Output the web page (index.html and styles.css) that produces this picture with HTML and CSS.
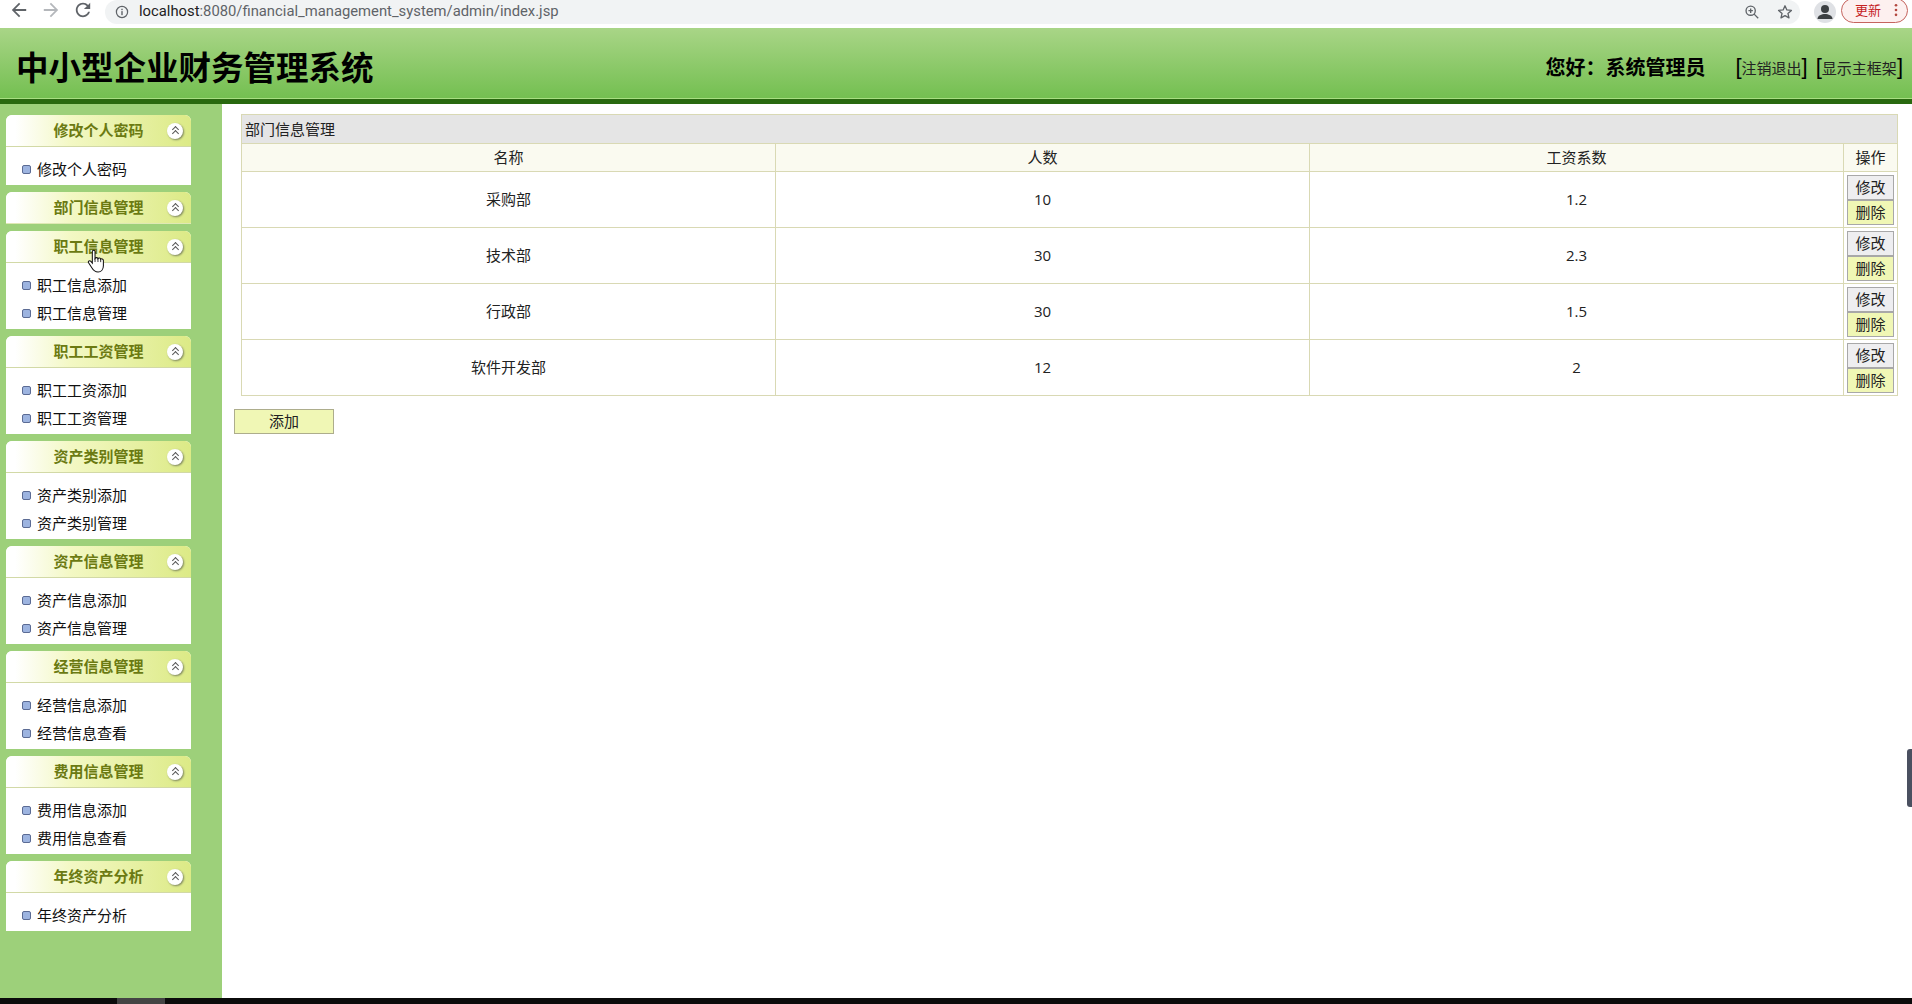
FILE: index.html
```html
<!DOCTYPE html>
<html lang="zh-CN">
<head>
    <meta charset="UTF-8">
    <title>中小型企业财务管理系统</title>
    <link rel="stylesheet" href="styles.css">
</head>
<body>
    <!-- Browser toolbar -->
    <div class="toolbar">
        <svg class="nav-icon" viewBox="2 2 20 20"><path d="M20 11H7.83l5.59-5.59L12 4l-8 8 8 8 1.41-1.41L7.83 13H20v-2z"/></svg>
        <svg class="nav-icon nav-off" viewBox="2 2 20 20"><path d="M4 11h12.17l-5.59-5.59L12 4l8 8-8 8-1.41-1.41L16.17 13H4v-2z"/></svg>
        <svg class="nav-icon" viewBox="2 2 20 20"><path d="M17.65 6.35C16.2 4.9 14.21 4 12 4c-4.42 0-7.99 3.58-7.99 8s3.57 8 7.99 8c3.73 0 6.84-2.55 7.73-6h-2.08c-.82 2.33-3.04 4-5.65 4-3.31 0-6-2.69-6-6s2.69-6 6-6c1.66 0 3.14.69 4.22 1.78L13 11h7V4l-2.35 2.35z"/></svg>
        <div class="urlbar">
            <svg class="info-icon" viewBox="0 0 16 16"><circle cx="8" cy="8" r="6.4" fill="none" stroke="#5f6368" stroke-width="1.4"/><rect x="7.2" y="7" width="1.6" height="4.6" fill="#5f6368"/><rect x="7.2" y="4.3" width="1.6" height="1.6" fill="#5f6368"/></svg>
            <span class="url"><span class="host">localhost</span>:8080/financial_management_system/admin/index.jsp</span>
            <svg class="url-icon" viewBox="0 0 18 18"><circle cx="7.5" cy="7.5" r="5.2" fill="none" stroke="#5f6368" stroke-width="1.5"/><path d="M11.4 11.4L16 16M5 7.5h5M7.5 5v5" fill="none" stroke="#5f6368" stroke-width="1.5"/></svg>
            <svg class="url-icon star-icon" viewBox="0 0 18 18"><path d="M9 2l2.1 4.7 5.1.5-3.9 3.4 1.2 5L9 13l-4.5 2.6 1.2-5-3.9-3.4 5.1-.5z" fill="none" stroke="#5f6368" stroke-width="1.5" stroke-linejoin="round"/></svg>
        </div>
        <div class="avatar">
            <svg viewBox="0 0 22 22"><circle cx="11" cy="8" r="4" fill="#3c4043"/><path d="M3.5 18c0-3.6 4.3-5 7.5-5s7.5 1.4 7.5 5z" fill="#3c4043"/></svg>
        </div>
        <div class="update">
            <span>更新</span>
            <svg viewBox="0 0 4 16"><circle cx="2" cy="2.5" r="1.5"/><circle cx="2" cy="8" r="1.5"/><circle cx="2" cy="13.5" r="1.5"/></svg>
        </div>
    </div>

    <!-- Page header -->
    <div class="header">
        <h1>中小型企业财务管理系统</h1>
        <div class="user-info">
            <span class="hello">您好：系统管理员</span>
            <span class="links">
                <span class="link"><b>[</b>注销退出<b>]</b></span>
                <span class="link"><b>[</b>显示主框架<b>]</b></span>
            </span>
        </div>
    </div>

    <div class="page">
        <!-- Left menu -->
        <div class="sidebar">
            <div class="menu">
                <div class="menu-title"><span>修改个人密码</span><i class="fold"></i></div>
                <ul><li>修改个人密码</li></ul>
            </div>
            <div class="menu">
                <div class="menu-title closed"><span>部门信息管理</span><i class="fold"></i></div>
            </div>
            <div class="menu">
                <div class="menu-title"><span>职工信息管理</span><i class="fold"></i></div>
                <ul><li>职工信息添加</li><li>职工信息管理</li></ul>
            </div>
            <div class="menu">
                <div class="menu-title"><span>职工工资管理</span><i class="fold"></i></div>
                <ul><li>职工工资添加</li><li>职工工资管理</li></ul>
            </div>
            <div class="menu">
                <div class="menu-title"><span>资产类别管理</span><i class="fold"></i></div>
                <ul><li>资产类别添加</li><li>资产类别管理</li></ul>
            </div>
            <div class="menu">
                <div class="menu-title"><span>资产信息管理</span><i class="fold"></i></div>
                <ul><li>资产信息添加</li><li>资产信息管理</li></ul>
            </div>
            <div class="menu">
                <div class="menu-title"><span>经营信息管理</span><i class="fold"></i></div>
                <ul><li>经营信息添加</li><li>经营信息查看</li></ul>
            </div>
            <div class="menu">
                <div class="menu-title"><span>费用信息管理</span><i class="fold"></i></div>
                <ul><li>费用信息添加</li><li>费用信息查看</li></ul>
            </div>
            <div class="menu">
                <div class="menu-title"><span>年终资产分析</span><i class="fold"></i></div>
                <ul><li>年终资产分析</li></ul>
            </div>
        </div>

        <!-- Department table -->
        <div class="content">
            <table class="grid">
                <colgroup><col class="col-data"><col class="col-data"><col class="col-data"><col class="col-op"></colgroup>
                <tr class="grid-title"><td colspan="4">部门信息管理</td></tr>
                <tr class="grid-head"><td>名称</td><td>人数</td><td>工资系数</td><td>操作</td></tr>
                <tr>
                    <td>采购部</td><td>10</td><td>1.2</td>
                    <td class="ops"><button class="btn-edit">修改</button><button class="btn-del">删除</button></td>
                </tr>
                <tr>
                    <td>技术部</td><td>30</td><td>2.3</td>
                    <td class="ops"><button class="btn-edit">修改</button><button class="btn-del">删除</button></td>
                </tr>
                <tr>
                    <td>行政部</td><td>30</td><td>1.5</td>
                    <td class="ops"><button class="btn-edit">修改</button><button class="btn-del">删除</button></td>
                </tr>
                <tr>
                    <td>软件开发部</td><td>12</td><td>2</td>
                    <td class="ops"><button class="btn-edit">修改</button><button class="btn-del">删除</button></td>
                </tr>
            </table>
            <button class="btn-add">添加</button>
        </div>
    </div>

    <!-- Taskbar strip at the bottom of the capture -->
    <div class="taskbar"><span class="task-item"></span></div>

    <div class="scroll-handle"></div>
    <svg class="cursor" viewBox="0 0 18 23"><path d="M5 2.2C5 .9 7.6 .9 7.6 2.2V9C8.2 8 10.2 8 10.4 9.2 11 8.3 12.9 8.5 13 9.8 13.7 9 15.6 9.4 15.6 11V16C15.6 19.5 13.5 22 10.5 22 7.5 22 6 20.5 4.5 18L1.4 13.2C.6 11.8 2.4 10.5 3.6 11.8L5 13.5Z" fill="#fff" stroke="#111" stroke-width="1"/><path d="M7.6 9v3.5M10.4 9.2v3.3M13 9.8v2.8" fill="none" stroke="#111" stroke-width=".8"/></svg>
</body>
</html>
```

FILE: styles.css
```css
* {
    box-sizing: border-box;
}
html, body {
    margin: 0;
    height: 100%;
}
body {
    position: relative;
    width: 1912px;
    height: 1004px;
    overflow: hidden;
    display: flex;
    flex-direction: column;
    font-family: "Open Sans", "Noto Sans CJK SC", sans-serif;
    font-size: 15px;
    color: #222;
    background: #fff;
}

/* browser toolbar */
.toolbar {
    height: 28px;
    flex: none;
    display: flex;
    align-items: flex-start;
    gap: 14px;
    padding: 1px 4px 0 10px;
    background: #fff;
}
.nav-icon {
    width: 18px;
    height: 18px;
    flex: none;
    fill: #5f6368;
}
.nav-off {
    fill: #b4b7bb;
}
.urlbar {
    flex: 1;
    height: 24px;
    margin: -1px 0 0 -1px;
    padding: 0 7px 0 10px;
    display: flex;
    align-items: center;
    background: #f1f3f4;
    border-radius: 12px;
}
.info-icon {
    width: 14px;
    height: 14px;
    flex: none;
}
.url {
    flex: 1;
    margin-left: 10px;
    padding-bottom: 2px;
    font-family: "Roboto", "Liberation Sans", sans-serif;
    font-size: 14.8px;
    color: #5f6368;
}
.host {
    color: #222;
}
.url-icon {
    width: 16px;
    height: 16px;
    flex: none;
}
.star-icon {
    margin-left: 17px;
}
.avatar {
    width: 22px;
    height: 22px;
    flex: none;
    border-radius: 50%;
    background: #dfe1e5;
}
.avatar svg {
    display: block;
}
.update {
    width: 67px;
    height: 25px;
    flex: none;
    margin: -3px 0 0 -9px;
    padding: 0 9px 2px 13px;
    display: flex;
    align-items: center;
    justify-content: space-between;
    border: 1px solid #c5645e;
    border-radius: 13px;
    background: #fdf0ef;
    color: #c5221f;
    font-size: 13px;
}
.update svg {
    width: 4px;
    height: 14px;
    fill: #b3473f;
}

/* header */
.header {
    height: 76px;
    flex: none;
    display: flex;
    align-items: center;
    justify-content: space-between;
    padding: 8px 9px 0 16px;
    background: linear-gradient(#a9d587, #73bf50);
    border-bottom: 5px solid #29690f;
    box-shadow: inset 0 -1px 0 #a8de82;
}
.header h1 {
    margin: 0;
    font-size: 32.5px;
    line-height: 40px;
    font-weight: 700;
    color: #000;
}
.user-info {
    display: flex;
    align-items: center;
    gap: 30px;
    padding-bottom: 2px;
}
.hello {
    font-size: 20px;
    font-weight: 700;
    color: #000;
}
.links {
    display: flex;
    gap: 8px;
}
.link {
    font-size: 15px;
    color: #222;
}
.link b {
    font-family: "Liberation Sans", sans-serif;
    font-size: 22px;
    font-weight: 400;
    color: #000;
}

/* page body */
.page {
    flex: 1;
    display: flex;
    min-height: 0;
}
.sidebar {
    width: 222px;
    flex: none;
    display: flex;
    flex-direction: column;
    gap: 7px;
    padding: 11px 31px 0 6px;
    background: #9dd07a;
}
.menu {
    background: #fff;
    border-radius: 6px 6px 0 0;
}
.menu-title {
    position: relative;
    height: 32px;
    text-align: center;
    line-height: 30px;
    font-weight: 700;
    color: #6b7a12;
    background: linear-gradient(to right, #fff 5%, #f3f8c4 35%, #dcea86 100%);
    border-bottom: 1px solid #d2d9a6;
    border-radius: 6px 6px 0 0;
}
.menu-title.closed {
    border-bottom-color: #dfe8b4;
}
.fold {
    position: absolute;
    top: 8px;
    right: 8px;
    width: 16px;
    height: 16px;
    border-radius: 50%;
    background: #fff;
    box-shadow: 1px 1px 2px #7d8560;
}
.fold::before, .fold::after {
    content: "";
    position: absolute;
    left: 6px;
    width: 4px;
    height: 4px;
    border-top: 1.5px solid #555;
    border-left: 1.5px solid #555;
    transform: rotate(45deg);
}
.fold::before {
    top: 4px;
}
.fold::after {
    top: 8px;
}
.menu ul {
    list-style: none;
    margin: 0;
    padding: 8px 0 2px;
}
.menu li {
    position: relative;
    height: 28px;
    padding-left: 31px;
    line-height: 28px;
    color: #111;
}
.menu li::before {
    content: "";
    position: absolute;
    left: 16px;
    top: 10px;
    width: 7px;
    height: 7px;
    border: 1px solid #5b6b94;
    border-radius: 2px;
    background: #9db4e0;
}

/* content */
.content {
    flex: 1;
    padding: 10px 14px 0 12px;
}
.grid {
    width: 1656px;
    margin-left: 7px;
    table-layout: fixed;
    border-collapse: collapse;
}
.col-data {
    width: 534px;
}
.col-op {
    width: 54px;
}
.grid td {
    height: 56px;
    padding: 0 0 2px;
    text-align: center;
    border: 1px solid #d9d9b4;
}
.grid .grid-title td {
    height: 29px;
    padding-left: 3px;
    text-align: left;
    background: #e5e5e5;
}
.grid .grid-head td {
    height: 28px;
    background: #fafaf0;
}
.grid .ops {
    padding: 0;
    font-size: 0;
}
.ops button {
    display: block;
    width: 47px;
    height: 25px;
    margin: 0 auto;
    padding: 0 0 2px;
    font-family: inherit;
    font-size: 15px;
    color: #222;
    border: 1px solid #a8a8a8;
}
.btn-edit {
    background: #eeeef0;
}
.btn-del {
    background: #f0f7b5;
}
.btn-add {
    display: block;
    width: 100px;
    height: 25px;
    margin-top: 13px;
    padding: 0 0 2px;
    font-family: inherit;
    font-size: 15px;
    color: #222;
    background: #f0f7b5;
    border: 1px solid #adad8c;
}

/* bottom strip and overlays */
.taskbar {
    height: 6px;
    flex: none;
    padding-left: 117px;
    background: #0b0b0b;
}
.task-item {
    display: block;
    width: 48px;
    height: 6px;
    background: #444;
}
.scroll-handle {
    position: absolute;
    top: 749px;
    right: 0;
    width: 5px;
    height: 58px;
    border-radius: 3px 0 0 3px;
    background: #4a5060;
}
.cursor {
    position: absolute;
    left: 87px;
    top: 249px;
    width: 19px;
    height: 24px;
}
```
